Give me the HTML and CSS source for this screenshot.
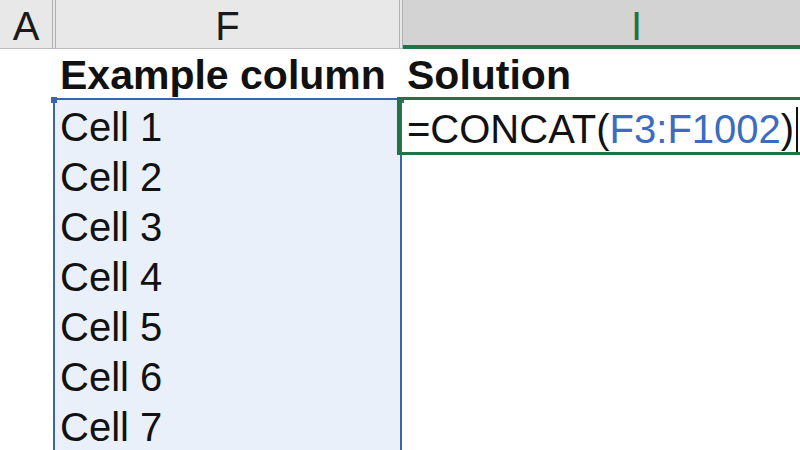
FILE: index.html
```html
<!DOCTYPE html>
<html>
<head>
<meta charset="utf-8">
<link rel="stylesheet" href="styles.css">
</head>
<body>
<div class="sheet">
  <div class="range-sel">
    <span class="handle handle-l"></span>
    <span class="handle handle-r"></span>
  </div>
  <div class="active-cell"></div>

  <div class="hcell">A</div>
  <div class="hsep"></div>
  <div class="hcell">F</div>
  <div class="hsep"></div>
  <div class="hcell hcell-sel">I</div>

  <div class="cell"></div><div class="cell"></div>
  <div class="cell bold">Example column</div><div class="cell"></div>
  <div class="cell bold">Solution</div>

  <div class="cell"></div><div class="cell"></div>
  <div class="cell">Cell 1</div><div class="cell"></div>
  <div class="cell formula">=CONCAT(<span class="ref">F3:F1002</span>)<span class="caret"></span></div>

  <div class="cell"></div><div class="cell"></div>
  <div class="cell">Cell 2</div><div class="cell"></div><div class="cell"></div>

  <div class="cell"></div><div class="cell"></div>
  <div class="cell">Cell 3</div><div class="cell"></div><div class="cell"></div>

  <div class="cell"></div><div class="cell"></div>
  <div class="cell">Cell 4</div><div class="cell"></div><div class="cell"></div>

  <div class="cell"></div><div class="cell"></div>
  <div class="cell">Cell 5</div><div class="cell"></div><div class="cell"></div>

  <div class="cell"></div><div class="cell"></div>
  <div class="cell">Cell 6</div><div class="cell"></div><div class="cell"></div>

  <div class="cell"></div><div class="cell"></div>
  <div class="cell">Cell 7</div><div class="cell"></div><div class="cell"></div>
</div>
</body>
</html>
```

FILE: styles.css
```css
html, body {
  margin: 0;
  padding: 0;
  background: #ffffff;
  overflow: hidden;
}

.sheet {
  position: relative;
  display: grid;
  grid-template-columns: 52px 4px 343px 4px 397px;
  grid-template-rows: 49px repeat(7, 50px) 51px;
  width: 800px;
  height: 450px;
  overflow: hidden;
  font-family: "Liberation Sans", Arial, sans-serif;
  font-size: 40px;
  color: #111111;
}

.hcell {
  position: relative;
  box-sizing: border-box;
  background: #e8e8e8;
  border-bottom: 1px solid #bdbdbd;
  text-align: center;
  line-height: 40px;
  padding-top: 6px;
  color: #1a1a1a;
}

.hsep {
  position: relative;
  box-sizing: border-box;
  background: #e8e8e8;
  border-left: 1px solid #b0b0b0;
  border-right: 1px solid #b0b0b0;
  border-bottom: 1px solid #bdbdbd;
}

.hcell-sel {
  background: #d3d3d3;
  border-bottom: 4px solid #217346;
  color: #217346;
  padding-left: 70px;
}

.cell {
  position: relative;
  box-sizing: border-box;
  white-space: nowrap;
  line-height: 40px;
  padding: 8px 0 0 4px;
  overflow: hidden;
}

.bold {
  font-weight: bold;
  font-size: 41px;
  padding-top: 6px;
}

.formula {
  padding-left: 4px;
  overflow: visible;
}

.ref {
  color: #3a6cc0;
}

.caret {
  display: inline-block;
  width: 2px;
  height: 45px;
  background: #111111;
  margin-left: 2px;
  vertical-align: -9px;
}

.range-sel {
  position: absolute;
  left: 53px;
  top: 98px;
  width: 349px;
  bottom: 0;
  box-sizing: border-box;
  border: 2px solid #3a65ad;
  border-bottom: none;
  background: #eaf0fa;
}

.handle {
  position: absolute;
  width: 6px;
  height: 6px;
  background: #3a65ad;
  top: -3px;
}

.handle-l { left: -4px; }
.handle-r { right: -4px; }

.active-cell {
  position: absolute;
  left: 397px;
  top: 97px;
  right: 0;
  height: 58px;
  box-sizing: border-box;
  border: 3px solid #217346;
  border-left-width: 4px;
  border-right: none;
  z-index: 2;
}
```
